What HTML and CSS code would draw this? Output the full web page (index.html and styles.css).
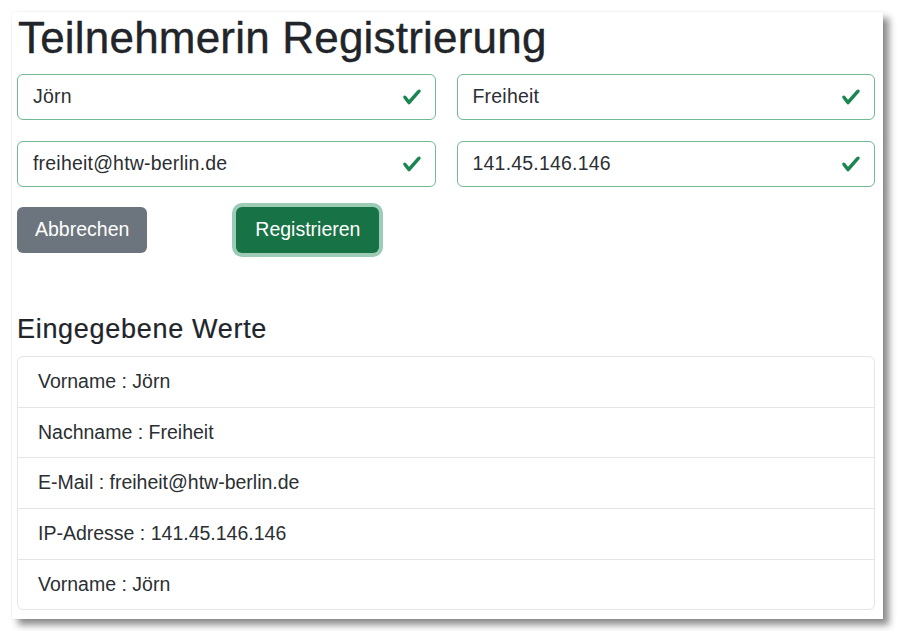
FILE: index.html
```html
<!DOCTYPE html>
<html lang="de">
<head>
<meta charset="utf-8">
<title>Teilnehmerin Registrierung</title>
<link rel="stylesheet" href="styles.css">
</head>
<body>
<div class="stage">
  <div class="panel">
    <h1 class="title">Teilnehmerin Registrierung</h1>
    <form class="form-grid">
      <label class="field">
        <input class="field-input" type="text" value="Jörn">
        <svg class="check" viewBox="0 0 8 8" aria-hidden="true"><path d="M2.3 6.73.6 4.53c-.4-1.04.46-1.4 1.1-.8l1.1 1.4 3.4-3.8c.6-.63 1.6-.27 1.2.7l-4 4.6c-.43.5-.8.4-1.1.1z"/></svg>
      </label>
      <label class="field">
        <input class="field-input" type="text" value="Freiheit">
        <svg class="check" viewBox="0 0 8 8" aria-hidden="true"><path d="M2.3 6.73.6 4.53c-.4-1.04.46-1.4 1.1-.8l1.1 1.4 3.4-3.8c.6-.63 1.6-.27 1.2.7l-4 4.6c-.43.5-.8.4-1.1.1z"/></svg>
      </label>
      <label class="field">
        <input class="field-input" type="text" value="freiheit@htw-berlin.de">
        <svg class="check" viewBox="0 0 8 8" aria-hidden="true"><path d="M2.3 6.73.6 4.53c-.4-1.04.46-1.4 1.1-.8l1.1 1.4 3.4-3.8c.6-.63 1.6-.27 1.2.7l-4 4.6c-.43.5-.8.4-1.1.1z"/></svg>
      </label>
      <label class="field">
        <input class="field-input" type="text" value="141.45.146.146">
        <svg class="check" viewBox="0 0 8 8" aria-hidden="true"><path d="M2.3 6.73.6 4.53c-.4-1.04.46-1.4 1.1-.8l1.1 1.4 3.4-3.8c.6-.63 1.6-.27 1.2.7l-4 4.6c-.43.5-.8.4-1.1.1z"/></svg>
      </label>
    </form>
    <div class="actions">
      <button class="btn btn-secondary" type="button">Abbrechen</button>
      <button class="btn btn-success" type="button">Registrieren</button>
    </div>
    <h2 class="subtitle">Eingegebene Werte</h2>
    <ul class="list">
      <li class="list-item">Vorname : Jörn</li>
      <li class="list-item">Nachname : Freiheit</li>
      <li class="list-item">E-Mail : freiheit@htw-berlin.de</li>
      <li class="list-item">IP-Adresse : 141.45.146.146</li>
      <li class="list-item">Vorname : Jörn</li>
    </ul>
  </div>
</div>
</body>
</html>
```
FILE: styles.css
```css
* {
  box-sizing: border-box;
}

html, body {
  margin: 0;
  background: #ffffff;
}

body {
  font-family: "Liberation Sans", Arial, sans-serif;
  color: #212529;
}

.stage {
  padding: 12px;
}

.panel {
  width: 871px;
  height: 607px;
  background: #ffffff;
  padding: 0 8px 0 5px;
  box-shadow: 0 0 1px rgba(0, 0, 0, 0.18), 6px 6px 7px rgba(0, 0, 0, 0.45);
}

.title {
  margin: 0 0 9px 0;
  font-size: 44px;
  line-height: 1.2;
  font-weight: 400;
  color: #212529;
  -webkit-text-stroke: 0.4px #212529;
  letter-spacing: 0.2px;
  padding-left: 1px;
}

.form-grid {
  display: grid;
  grid-template-columns: 1fr 1fr;
  column-gap: 21px;
  row-gap: 21px;
  margin: 0;
}

.field {
  display: flex;
  align-items: center;
  height: 46px;
  border: 1px solid #72b994;
  border-radius: 6px;
  padding: 0 13px 0 15px;
  background: #ffffff;
}

.field-input {
  flex: 1;
  min-width: 0;
  border: 0;
  outline: 0;
  padding: 0;
  margin: 0;
  background: transparent;
  font-family: "Liberation Sans", Arial, sans-serif;
  font-size: 19.5px;
  color: #2b2f33;
  letter-spacing: 0.2px;
}

.check {
  width: 20px;
  height: 20px;
  fill: #1b8651;
  flex: none;
}

.actions {
  display: flex;
  gap: 89px;
  margin-top: 20px;
}

.btn {
  height: 46px;
  border: 0;
  border-radius: 6px;
  font-family: "Liberation Sans", Arial, sans-serif;
  font-size: 19.5px;
  color: #ffffff;
}

.btn-secondary {
  background: #6c757d;
  padding: 0 18px;
}

.btn-success {
  background: #177245;
  padding: 0 19px;
  box-shadow: 0 0 0 4px rgba(60, 153, 110, 0.5);
}

.subtitle {
  margin: 60px 0 11px 0;
  font-size: 27px;
  line-height: 1.2;
  font-weight: 400;
  color: #212529;
  letter-spacing: 0.7px;
  -webkit-text-stroke: 0.2px #212529;
}

.list {
  list-style: none;
  margin: 0;
  padding: 0;
  border: 1px solid #e3e5e7;
  border-radius: 6px;
}

.list-item {
  padding: 10px 20px;
  font-size: 19.5px;
  line-height: 29.6px;
  color: #2b2f33;
  border-top: 1px solid #e3e5e7;
}

.list-item:first-child {
  border-top: 0;
}
```
